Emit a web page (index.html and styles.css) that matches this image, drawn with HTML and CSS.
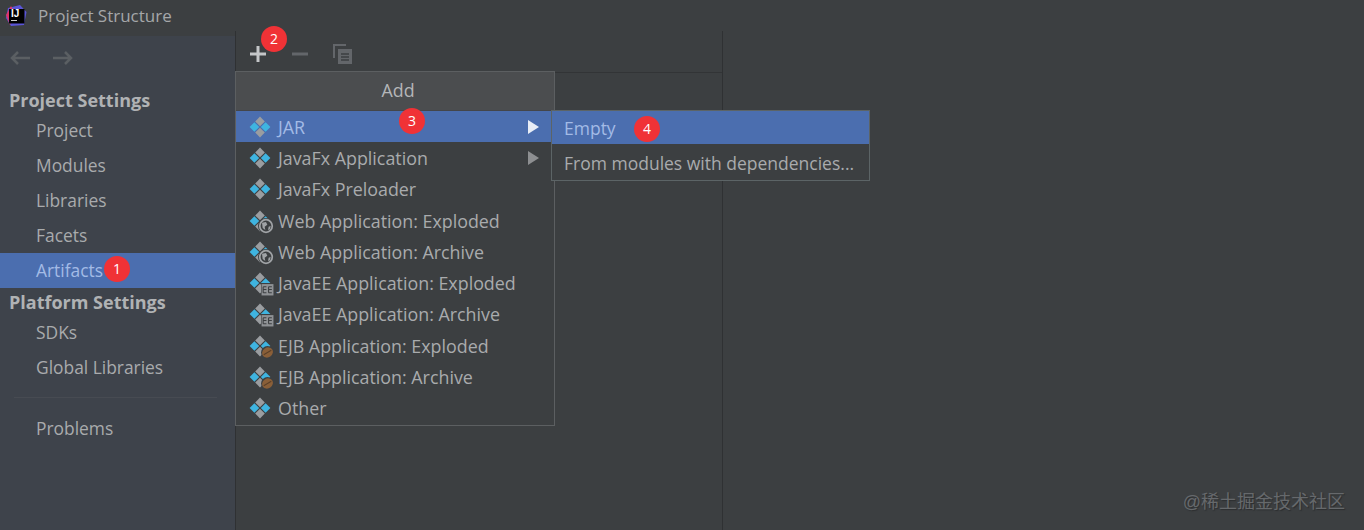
FILE: index.html
```html
<!DOCTYPE html>
<html lang="en">
<head>
  <meta charset="UTF-8" />
  <meta name="viewport" content="width=device-width, initial-scale=1.0"/>
  <title>Project Structure</title>
  <link rel="stylesheet" href="styles.css">
</head>
<body>
  <svg class="defs" width="0" height="0">
    <symbol id="artifact" viewBox="0 0 22 22">
      <path d="M11 .6 15.800 5.400 11 10.200 6.200 5.400Z" fill="#9a9da0"/>
      <path d="M11 11.800 15.800 16.600 11 21.400 6.200 16.600Z" fill="#9a9da0"/>
      <path d="M5.400 6.200 10.200 11 5.400 15.800 .6 11Z" fill="#3fb4e0"/>
      <path d="M16.600 6.200 21.400 11 16.600 15.800 11.800 11Z" fill="#3fb4e0"/>
    </symbol>
    <symbol id="globe" viewBox="0 0 12 12">
      <circle cx="6" cy="6" r="6" fill="#3c3f41"/>
      <circle cx="6" cy="6" r="4.700" fill="none" stroke="#a0a3a6" stroke-width="1.300"/>
      <path d="M3 3.500 6 3 7 5 5 6.500 5.500 9 3.500 7.500Z M8 6.500 9.500 6 9 8.500 7.500 9Z" fill="#a0a3a6"/>
    </symbol>
    <symbol id="ee" viewBox="0 0 12 12">
      <rect width="12" height="12" fill="#3c3f41"/>
      <rect x=".5" y="1" width="11" height="10.500" fill="#8e9194"/>
      <path d="M2 3.500h3M2 6h3M2 9h3M2 3.500v5.500M7 3.500h3M7 6h3M7 9h3M7 3.500v5.500" stroke="#3c3f41" stroke-width="1" fill="none"/>
    </symbol>
    <symbol id="bean" viewBox="0 0 12 12">
      <circle cx="6" cy="6" r="6" fill="#3c3f41"/>
      <ellipse cx="6" cy="6" rx="5.200" ry="4.500" transform="rotate(-35 6 6)" fill="#8a5f38"/>
      <path d="M2.500 8 9.500 4" stroke="#5a3f28" stroke-width="1"/>
    </symbol>
  </svg>

  <div class="titlebar">
    <svg class="app-logo" width="22" height="22" viewBox="0 0 22 22">
      <path d="M3 3 15 0 21.500 7 19 20 6 21 1 13Z" fill="#5a55d8"/>
      <path d="M1 10 6 1 10 8 5 20Z" fill="#e0346c"/>
      <rect x="4" y="4" width="15.500" height="14.500" fill="#000"/>
      <rect x="6" y="15" width="6" height="1" fill="#ccc"/>
      <text x="6" y="12" class="app-logo-text">IJ</text>
    </svg>
    <span class="title">Project Structure</span>
  </div>

  <div class="main">
    <aside class="sidebar">
      <div class="nav-arrows">
        <svg width="22" height="16" viewBox="0 0 22 16"><path d="M21 8H3M9 2 3 8l6 6" fill="none" stroke="#5b5f63" stroke-width="2.500"/></svg>
        <svg width="22" height="16" viewBox="0 0 22 16"><path d="M1 8H19M13 2l6 6-6 6" fill="none" stroke="#5b5f63" stroke-width="2.500"/></svg>
      </div>
      <div class="nav-heading">Project Settings</div>
      <div class="nav-item">Project</div>
      <div class="nav-item">Modules</div>
      <div class="nav-item">Libraries</div>
      <div class="nav-item">Facets</div>
      <div class="nav-item selected">Artifacts</div>
      <div class="nav-heading second">Platform Settings</div>
      <div class="nav-item">SDKs</div>
      <div class="nav-item">Global Libraries</div>
      <div class="nav-sep"></div>
      <div class="nav-item">Problems</div>
    </aside>

    <section class="middle">
      <div class="toolbar">
        <svg width="20" height="20" viewBox="0 0 20 20"><path d="M10 2v16M2 10h16" stroke="#c4c6c8" stroke-width="3"/></svg>
        <svg width="18" height="20" viewBox="0 0 18 20"><path d="M1 10h16" stroke="#63666a" stroke-width="3"/></svg>
        <svg width="22" height="22" viewBox="0 0 22 22">
          <path d="M2 15V2h12" fill="none" stroke="#63666a" stroke-width="2"/>
          <rect x="6" y="6" width="14" height="15" fill="#63666a"/>
          <path d="M9 11h8M9 14h8M9 17h8" stroke="#3c3f41" stroke-width="1.500"/>
        </svg>
      </div>
    </section>

    <section class="right"></section>
  </div>

  <div class="menu">
    <div class="menu-title">Add</div>
    <div class="menu-item active"><svg class="ic"><use href="#artifact"/></svg>JAR<span class="caret"></span></div>
    <div class="menu-item"><svg class="ic"><use href="#artifact"/></svg>JavaFx Application<span class="caret"></span></div>
    <div class="menu-item"><svg class="ic"><use href="#artifact"/></svg>JavaFx Preloader</div>
    <div class="menu-item"><span class="ic-wrap"><svg class="ic"><use href="#artifact"/></svg><svg class="ic-sub large"><use href="#globe"/></svg></span>Web Application: Exploded</div>
    <div class="menu-item"><span class="ic-wrap"><svg class="ic"><use href="#artifact"/></svg><svg class="ic-sub large"><use href="#globe"/></svg></span>Web Application: Archive</div>
    <div class="menu-item"><span class="ic-wrap"><svg class="ic"><use href="#artifact"/></svg><svg class="ic-sub"><use href="#ee"/></svg></span>JavaEE Application: Exploded</div>
    <div class="menu-item"><span class="ic-wrap"><svg class="ic"><use href="#artifact"/></svg><svg class="ic-sub"><use href="#ee"/></svg></span>JavaEE Application: Archive</div>
    <div class="menu-item"><span class="ic-wrap"><svg class="ic"><use href="#artifact"/></svg><svg class="ic-sub"><use href="#bean"/></svg></span>EJB Application: Exploded</div>
    <div class="menu-item"><span class="ic-wrap"><svg class="ic"><use href="#artifact"/></svg><svg class="ic-sub"><use href="#bean"/></svg></span>EJB Application: Archive</div>
    <div class="menu-item"><svg class="ic"><use href="#artifact"/></svg>Other</div>
  </div>

  <div class="submenu">
    <div class="sub-item active">Empty</div>
    <div class="sub-item">From modules with dependencies...</div>
  </div>

  <span class="badge b1">1</span>
  <span class="badge b2">2</span>
  <span class="badge b3">3</span>
  <span class="badge b4">4</span>

  <div class="watermark">@稀土掘金技术社区</div>
</body>
</html>
```

FILE: styles.css
```css
body {
  margin: 0;
  width: 1364px;
  height: 530px;
  overflow: hidden;
  position: relative;
  background: #3c3f41;
  font-family: "Open Sans", sans-serif;
  font-size: 17.4px;
  color: #a9abad;
}

.defs {
  position: absolute;
}

.titlebar {
  height: 31px;
  display: flex;
  align-items: center;
  padding-left: 5px;
  gap: 11px;
}

.title {
  font-size: 17px;
  color: #a5a7a9;
}

.app-logo-text {
  font-family: "Liberation Sans", sans-serif;
  font-size: 10px;
  font-weight: bold;
  fill: #fff;
}

.main {
  display: flex;
  height: 499px;
}

.sidebar {
  width: 235px;
  margin-top: 5px;
  background: #3e434b;
}

.nav-arrows {
  height: 51px;
  display: flex;
  gap: 21px;
  padding: 14px 0 0 9px;
  box-sizing: border-box;
}

.nav-heading {
  height: 26px;
  line-height: 26px;
  padding-left: 9px;
  font-weight: 700;
  font-size: 18px;
  color: #b0b2b4;
}

.nav-heading.second {
  height: 27px;
  line-height: 28px;
}

.nav-item {
  height: 35px;
  line-height: 35px;
  padding-left: 36px;
}

.nav-item.selected {
  background: #4b6eaf;
  color: #a3bbe6;
}

.nav-sep {
  height: 1px;
  margin: 12px 18px 13px 14px;
  background: #474b52;
}

.middle {
  width: 488px;
  border-left: 1px solid #2f3133;
  border-right: 1px solid #2f3133;
  box-sizing: border-box;
}

.toolbar {
  height: 42px;
  box-sizing: border-box;
  border-bottom: 1px solid #323436;
  display: flex;
  align-items: center;
  gap: 23px;
  padding: 4px 0 0 12px;
}

.right {
  flex: 1;
}

.menu {
  position: absolute;
  left: 235px;
  top: 71px;
  width: 320px;
  box-sizing: border-box;
  border: 1px solid #5c5f61;
  background: #3c3f41;
  font-size: 17.85px;
  padding-bottom: 1px;
}

.menu-title {
  height: 38px;
  line-height: 36px;
  padding-left: 6px;
  text-align: center;
  background: #4b4d4f;
  color: #b4b6b8;
  border-bottom: 1px solid #44464a;
}

.menu-item {
  height: 31.300px;
  display: flex;
  align-items: center;
  padding-left: 13px;
  gap: 7px;
  position: relative;
}

.menu-item.active,
.sub-item.active {
  background: #4b6eaf;
  color: #a3bbe6;
}

.ic {
  width: 22px;
  height: 22px;
  flex: none;
}

.ic-wrap {
  width: 22px;
  height: 22px;
  flex: none;
  position: relative;
}

.ic-sub {
  width: 13px;
  height: 13px;
  position: absolute;
  right: -3px;
  bottom: -2px;
}

.ic-sub.large {
  width: 16px;
  height: 16px;
}

.caret {
  position: absolute;
  left: 292px;
  top: 50%;
  margin-top: -7px;
  border-left: 11px solid #8d8f91;
  border-top: 7px solid transparent;
  border-bottom: 7px solid transparent;
}

.menu-item.active .caret {
  border-left-color: #e8edf6;
}

.submenu {
  position: absolute;
  left: 551px;
  top: 110px;
  width: 319px;
  height: 71px;
  box-sizing: border-box;
  border: 1px solid #5c6466;
  background: #3c3f41;
  font-size: 17.500px;
}

.sub-item {
  height: 33px;
  line-height: 34px;
  padding-left: 12px;
}

.sub-item.active {
  margin-bottom: 2px;
}

.badge {
  position: absolute;
  width: 26px;
  height: 26px;
  border-radius: 50%;
  background: #f03236;
  color: #fff;
  font-size: 14px;
  line-height: 26px;
  text-align: center;
}

.b1 { left: 104px; top: 256px; }
.b2 { left: 261px; top: 26px; }
.b3 { left: 399px; top: 108px; }
.b4 { left: 634px; top: 116px; }

.watermark {
  position: absolute;
  right: 19px;
  top: 487px;
  font-family: "Liberation Sans", "Noto Sans CJK SC", sans-serif;
  font-size: 18px;
  color: #66696c;
  text-shadow: 1px 1px 1px #2c2e30;
}
```
